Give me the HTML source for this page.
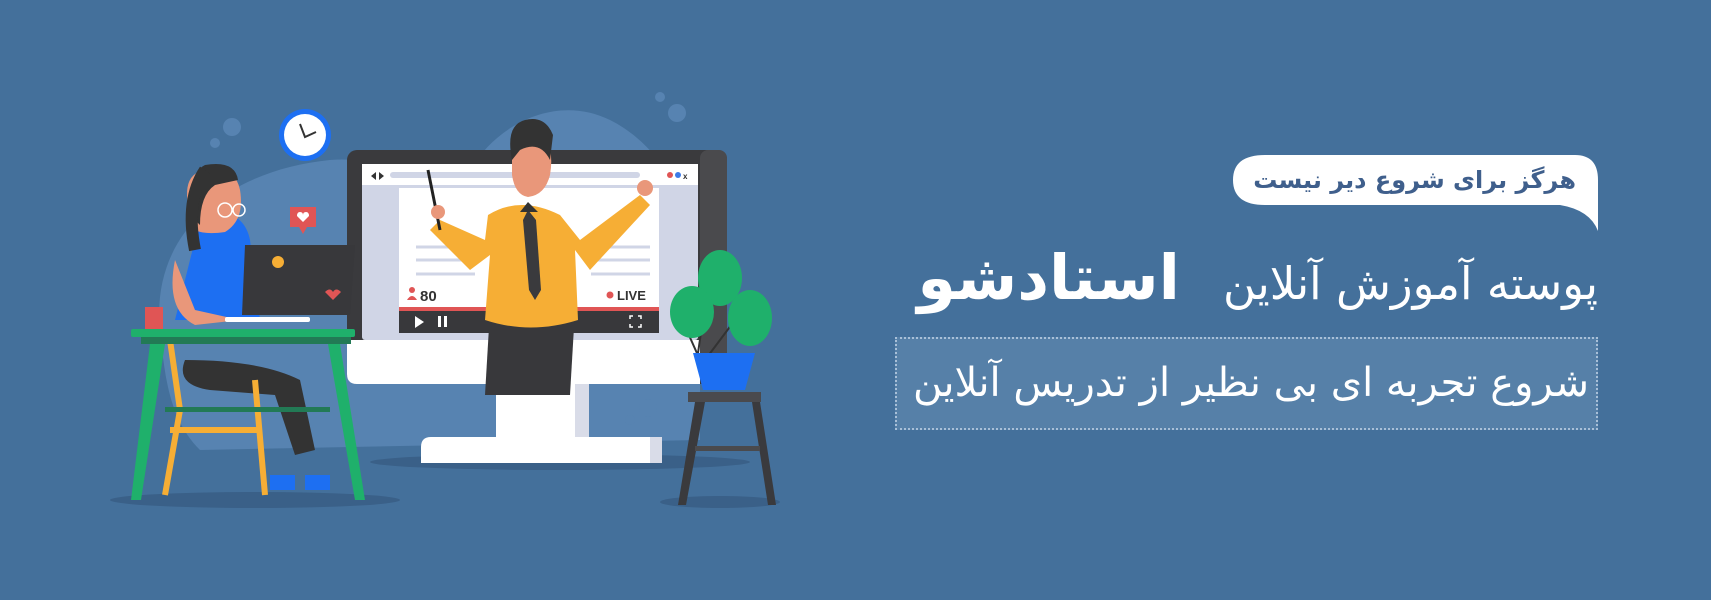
<!DOCTYPE html>
<html><head><meta charset="utf-8"><style>
html,body{margin:0;padding:0;}
body{width:1711px;height:600px;background:#44709b;position:relative;overflow:hidden;font-family:"DejaVu Sans",sans-serif;}
svg{position:absolute;left:0;top:0;}
.t{position:absolute;direction:rtl;white-space:nowrap;}
</style></head><body>
<svg width="1711" height="600" viewBox="0 0 1711 600">
 <path d="M160 330 C150 230 230 170 330 160 C390 155 430 190 470 170 C500 120 560 95 610 120 C660 145 690 200 700 260 L700 440 L200 450 C170 420 165 380 160 330 Z" fill="#5783b1"/>
 <circle cx="232" cy="127" r="9" fill="#5783b1"/><circle cx="215" cy="143" r="5" fill="#5783b1"/>
 <circle cx="660" cy="97" r="5" fill="#5783b1"/><circle cx="677" cy="113" r="9" fill="#5783b1"/>
 <circle cx="648" cy="408" r="9" fill="#5783b1"/><circle cx="630" cy="420" r="5" fill="#5783b1"/>
 <ellipse cx="255" cy="500" rx="145" ry="8" fill="#3a6088"/>
 <ellipse cx="560" cy="462" rx="190" ry="8" fill="#3a6088"/>
 <ellipse cx="720" cy="502" rx="60" ry="6" fill="#3a6088"/>
 <circle cx="305" cy="135" r="26" fill="#1d6ff2"/><circle cx="305" cy="135" r="21" fill="#fff"/>
 <path d="M300 124 L305 137 L316 132" stroke="#333" stroke-width="2" fill="none"/>
 <rect x="347" y="150" width="380" height="234" rx="10" fill="#3a3a3d"/>
 <rect x="700" y="150" width="27" height="234" rx="8" fill="#4a4a4d"/>
 <path d="M347 340 H700 V384 H357 Q347 384 347 374 Z" fill="#fff"/>
 <rect x="362" y="164" width="336" height="176" rx="3" fill="#d0d5e6"/>
 <rect x="362" y="164" width="336" height="21" fill="#fff"/>
 <rect x="390" y="172" width="250" height="6" rx="3" fill="#d0d5e6"/>
 <path d="M376 172 l-5 4 5 4z M379 172 l5 4 -5 4z" fill="#333"/>
 <circle cx="670" cy="175" r="3" fill="#e05555"/><circle cx="678" cy="175" r="3" fill="#3d7be8"/>
 <text x="683" y="179" font-size="8" font-weight="bold" fill="#333" font-family="Liberation Sans">x</text>
 <rect x="399" y="188" width="260" height="119" fill="#fff"/>
 <g stroke="#d0d5e6" stroke-width="3"><line x1="416" y1="247" x2="480" y2="247"/><line x1="416" y1="260" x2="480" y2="260"/><line x1="416" y1="274" x2="475" y2="274"/><line x1="591" y1="247" x2="650" y2="247"/><line x1="591" y1="260" x2="650" y2="260"/><line x1="591" y1="274" x2="650" y2="274"/></g>
 <rect x="399" y="307" width="260" height="4" fill="#e05555"/>
 <rect x="399" y="311" width="260" height="22" fill="#38383b"/>
 <path d="M415 316 l9 6 -9 6z" fill="#fff"/><rect x="438" y="316" width="3" height="11" fill="#fff"/><rect x="444" y="316" width="3" height="11" fill="#fff"/>
 <path d="M633 316 h-3 v3 M638 316 h3 v3 M633 327 h-3 v-3 M638 327 h3 v-3" stroke="#fff" stroke-width="1.5" fill="none"/>
 <circle cx="412" cy="290" r="3" fill="#e05555"/><path d="M407 300 q5 -8 10 0z" fill="#e05555"/>
 <text x="420" y="301" font-size="15" font-weight="bold" fill="#333" font-family="Liberation Sans">80</text>
 <circle cx="610" cy="295" r="3.5" fill="#e05555"/>
 <text x="617" y="300" font-size="13" font-weight="bold" fill="#333" font-family="Liberation Sans">LIVE</text>
 <rect x="496" y="384" width="93" height="54" fill="#fff"/><rect x="575" y="384" width="14" height="54" fill="#d9dce8"/>
 <path d="M421 447 Q421 437 431 437 H655 Q662 437 662 447 V463 H421Z" fill="#fff"/><rect x="650" y="437" width="12" height="26" fill="#d9dce8"/>
 <path d="M490 310 L575 310 L570 395 L485 395Z" fill="#38383b"/>
 <path d="M488 215 Q520 195 560 215 L580 240 L640 195 L650 205 L590 270 L575 250 L578 320 Q530 335 485 320 L490 255 L470 270 L430 230 L440 220 L485 240Z" fill="#f6ae35"/>
 <path d="M528 210 l-5 10 6 70 6 10 6-10 -5-70z" fill="#3a3a3d"/>
 <path d="M512 160 Q515 130 540 135 Q555 145 550 175 Q545 195 528 197 Q515 195 512 175Z" fill="#e9977a"/>
 <path d="M512 160 Q505 125 525 120 Q545 115 553 135 L550 160 Q540 140 520 150Z" fill="#333"/>
 <path d="M520 212 l8 -10 10 10z" fill="#333"/>
 <line x1="428" y1="170" x2="440" y2="230" stroke="#222" stroke-width="3"/>
 <circle cx="438" cy="212" r="7" fill="#e9977a"/><circle cx="645" cy="188" r="8" fill="#e9977a"/>
 <path d="M175 320 L195 240 Q200 215 220 212 Q245 215 250 240 L260 320Z" fill="#1d6ff2"/>
 <path d="M195 230 Q175 175 205 170 Q235 165 240 190 Q245 220 225 232 Q205 235 195 230Z" fill="#e9977a"/>
 <path d="M195 220 Q185 175 205 165 Q235 160 238 180 L215 185 Q200 195 200 225Z" fill="#333"/>
 <path d="M205 170 Q185 200 195 250" stroke="#333" stroke-width="12" fill="none"/>
 <circle cx="225" cy="210" r="7" fill="none" stroke="#fff" stroke-width="1.5"/><circle cx="239" cy="210" r="6" fill="none" stroke="#fff" stroke-width="1.5"/>
 <path d="M175 260 L195 310 L240 320 L195 325 Q165 310 175 260Z" fill="#e9977a"/>
 <path d="M245 245 L355 245 L350 315 L242 315Z" fill="#38383b"/>
 <circle cx="278" cy="262" r="6" fill="#f6ae35"/><path d="M325 292 q5-5 8 0 q3-5 8 0 l-8 8z" fill="#e05555"/>
 <rect x="225" y="317" width="85" height="5" rx="2" fill="#fff"/>
 <path d="M290 207 h26 v20 h-9 l-4 7 -4 -7 h-9z" fill="#e05555"/>
 <path d="M303 222 l-6-6 q0-4 3-4 q3 0 3 3 q0-3 3-3 q3 0 3 4z" fill="#fff"/>
 <path d="M185 360 Q260 360 300 380 L315 450 L295 455 L275 395 L210 390Q175 385 185 360Z" fill="#333"/>
 <rect x="270" y="475" width="25" height="15" fill="#1d6ff2"/><rect x="305" y="475" width="25" height="15" fill="#1d6ff2"/>
 <path d="M170 340 L180 410 L165 495 M255 380 L265 495 M170 430 L260 430" stroke="#f6ae35" stroke-width="6" fill="none"/>
 <rect x="131" y="329" width="224" height="8" rx="2" fill="#1fb06b"/>
 <rect x="141" y="337" width="210" height="7" fill="#227a55"/>
 <path d="M150 344 L131 500 H141 L165 344Z M328 344 L355 500 H365 L340 344Z" fill="#1fb06b"/>
 <rect x="165" y="407" width="165" height="5" fill="#227a55"/>
 <rect x="145" y="307" width="18" height="22" fill="#e05555"/>
 <path d="M697 360 L705 305 M700 360 L680 315 M705 360 L735 320" stroke="#333" stroke-width="2"/>
 <ellipse cx="720" cy="278" rx="22" ry="28" fill="#1fb06b"/>
 <ellipse cx="692" cy="312" rx="22" ry="26" fill="#1fb06b"/>
 <ellipse cx="750" cy="318" rx="22" ry="28" fill="#1fb06b"/>
 <path d="M693 353 H755 L745 390 H703Z" fill="#1d6ff2"/>
 <rect x="688" y="392" width="73" height="10" fill="#4a4a4d"/>
 <path d="M695 402 L678 505 H686 L705 402Z M752 402 L768 505 H776 L760 402Z" fill="#3a3a3d"/>
 <rect x="695" y="446" width="65" height="5" fill="#4a4a4d"/>
 <path d="M1265 155 H1575 Q1598 155 1598 180 V231 Q1590 210 1560 205 H1265 Q1233 205 1233 180 Q1233 155 1265 155Z" fill="#fff"/>
</svg>
<div class="t" style="right:135px;top:163px;font-size:24px;font-weight:bold;color:#3f5f8c;line-height:34px;">هرگز برای شروع دیر نیست</div>
<div class="t" style="right:113px;top:238px;font-size:62px;font-weight:bold;color:#fff;line-height:80px;"><span style="font-size:45px;font-weight:normal;">پوسته آموزش آنلاین</span>&nbsp; استادشو</div>
<div style="position:absolute;left:895px;top:337px;width:703px;height:93px;background:#5680a8;border:2px dotted #a9c0d8;box-sizing:border-box;"></div>
<div class="t" style="right:122px;top:356px;font-size:40px;color:#fff;line-height:55px;">شروع تجربه ای بی نظیر از تدریس آنلاین</div>
</body></html>
